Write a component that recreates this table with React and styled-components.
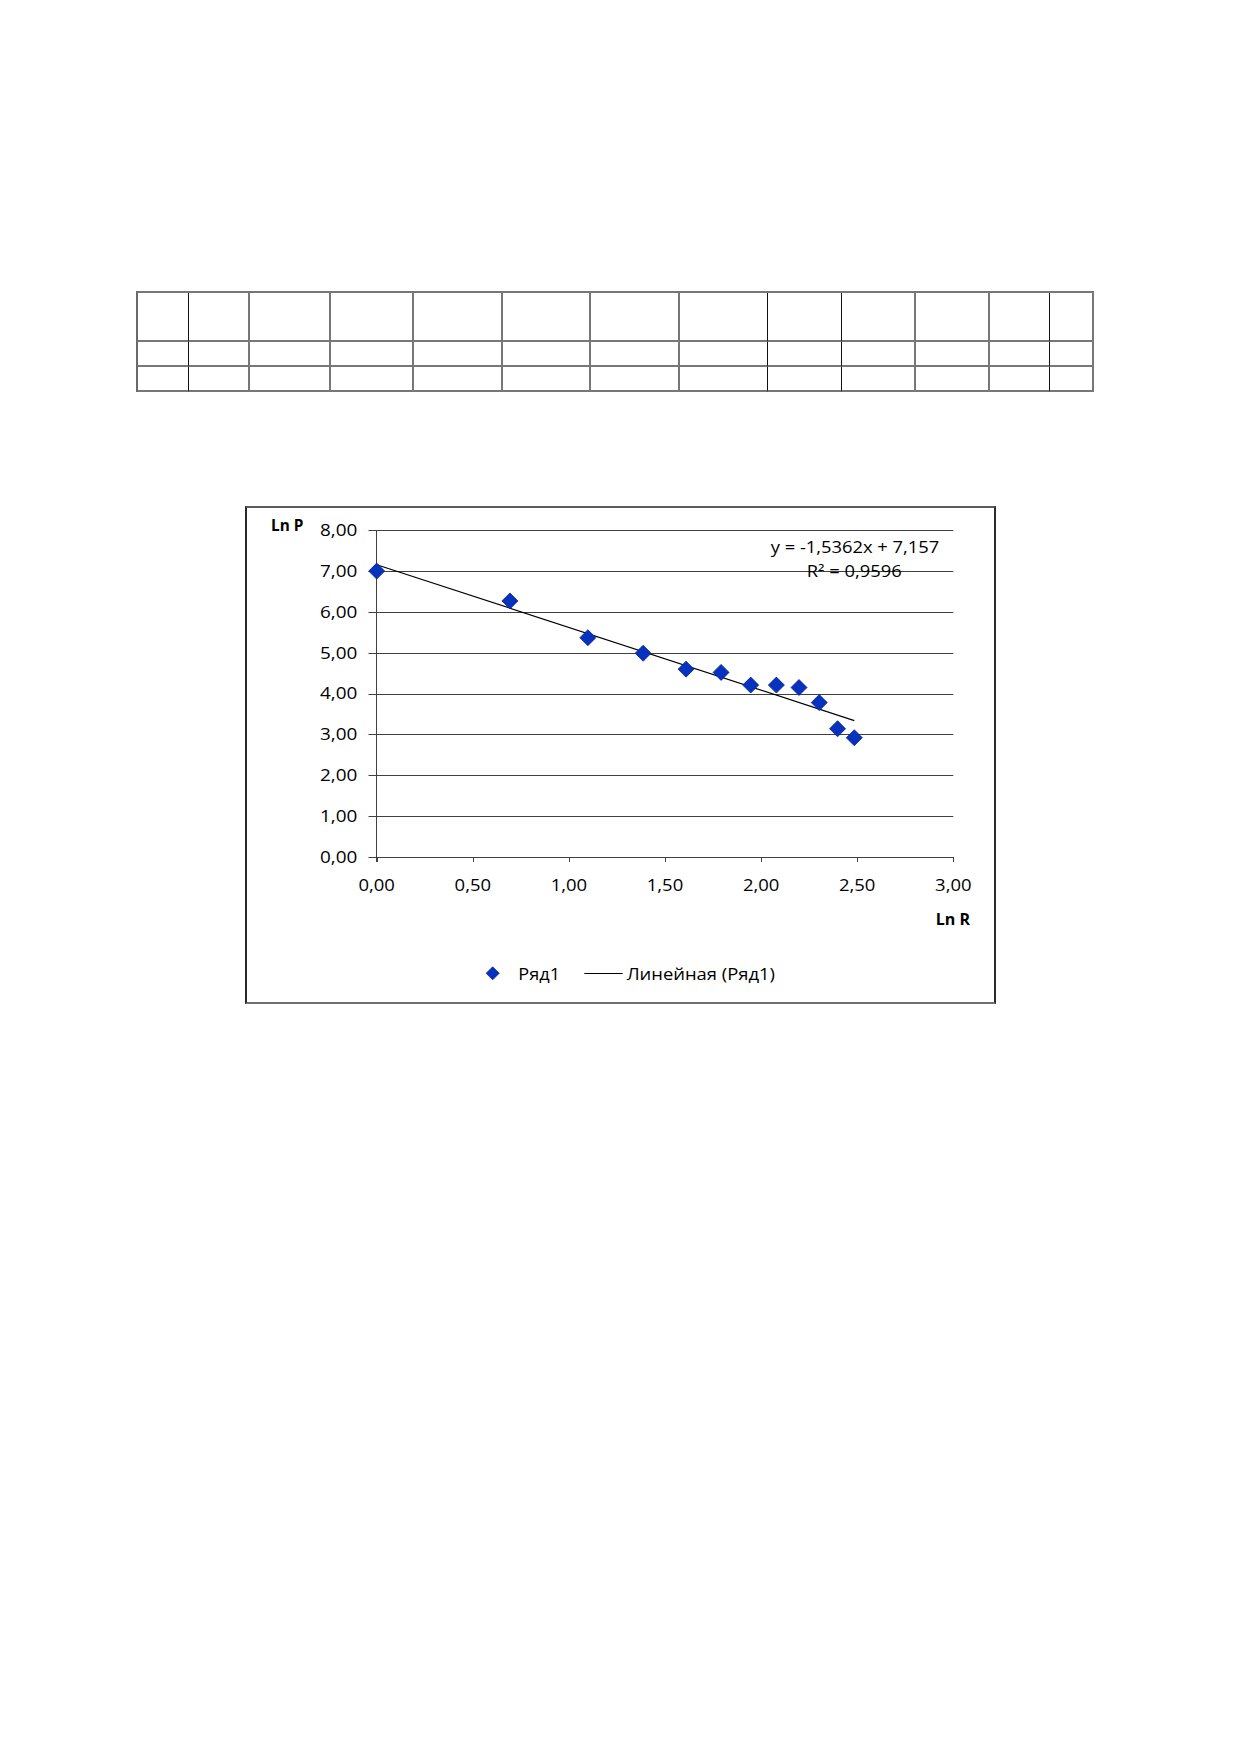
import React from 'react';
import styled, { createGlobalStyle } from 'styled-components';

const GlobalStyle = createGlobalStyle`
  html, body {
    margin: 0;
    padding: 0;
    background: #fff;
  }
  body {
    font-family: "Open Sans", "Liberation Sans", sans-serif;
  }
`;

// column widths of the empty table (px), taken from the scan
const COLS = [51, 61, 81, 83, 89, 88, 89, 88, 74, 74, 74, 60, 44];
const DARK_COLS = [0, 7, 8, 11];
const ROWS = [49, 25, 25];

// chart geometry in page coordinates
const X0 = 376.7;
const XS = 192.2;
const Y0 = 857;
const YS = 40.84;
const px = (v) => X0 + v * XS;
const py = (v) => Y0 - v * YS;

const SERIES = [7.0, 6.27, 5.37, 4.99, 4.6, 4.52, 4.21, 4.21, 4.15, 3.78, 3.14, 2.92].map((y, i) => ({
  x: Math.log(i + 1),
  y,
}));

const Page = styled.div`
  width: 1239px;
  min-height: 1752px;
  box-sizing: border-box;
  padding-top: 291px;
  background: #fff;
`;

const DataGrid = styled.div`
  display: grid;
  grid-template-columns: ${COLS.map((w) => `${w}px`).join(' ')};
  grid-template-rows: ${ROWS.map((h) => `${h}px`).join(' ')};
  width: max-content;
  margin-left: 136px;
  border-top: 2px solid #777;
  border-left: 2px solid #6a6a6a;
`;

const Cell = styled.div`
  box-sizing: border-box;
  border-bottom: 2px solid #777;
  border-right: ${(p) => (p.$dark ? '1px solid #111' : '2px solid #777')};
`;

const ChartFrame = styled.div`
  box-sizing: border-box;
  width: 751px;
  height: 498px;
  margin: 114px 0 0 245px;
  border-style: solid;
  border-width: 2px;
  border-color: #5c5c5c #2b2b2b #707070 #2b2b2b;
  background: #fff;
`;

const ChartSvg = styled.svg`
  display: block;
`;

const Label = styled.text`
  font-family: "Open Sans", "Liberation Sans", sans-serif;
  font-size: ${(p) => p.$size || 16}px;
  font-weight: ${(p) => (p.$bold ? 700 : 400)};
  fill: #000;
`;

const fmt = (v) => v.toFixed(2).replace('.', ',');

function Marker({ x, y, h = 8 }) {
  return (
    <path
      d={`M${x} ${y - h} L${x + h} ${y} L${x} ${y + h} L${x - h} ${y} Z`}
      fill="#0632bd"
      stroke="#08229a"
      strokeWidth="0.8"
    />
  );
}

function Chart() {
  const yTicks = [0, 1, 2, 3, 4, 5, 6, 7, 8];
  const xTicks = [0, 0.5, 1, 1.5, 2, 2.5, 3];
  const xEnd = Math.log(12);

  return (
    <ChartFrame>
      <ChartSvg width="747" height="494" viewBox="247 508 747 494">
        {yTicks.map((t) => (
          <line
            key={`g${t}`}
            x1={368.5}
            x2={px(3)}
            y1={Math.round(py(t)) + 0.5}
            y2={Math.round(py(t)) + 0.5}
            stroke="#404040"
            strokeWidth="1"
          />
        ))}
        <line x1={376.5} x2={376.5} y1={530} y2={862} stroke="#404040" strokeWidth="1" />
        {xTicks.map((t) => (
          <line
            key={`t${t}`}
            x1={Math.round(px(t)) + 0.5}
            x2={Math.round(px(t)) + 0.5}
            y1={857}
            y2={862}
            stroke="#404040"
            strokeWidth="1"
          />
        ))}

        {yTicks.map((t) => (
          <Label key={`yl${t}`} x={357.3} y={py(t) + 5.8} textAnchor="end" textLength="37.3" lengthAdjust="spacingAndGlyphs">
            {fmt(t)}
          </Label>
        ))}
        {xTicks.map((t) => (
          <Label key={`xl${t}`} x={px(t) - 18.2} y={890.8} textLength="36.4" lengthAdjust="spacingAndGlyphs">
            {fmt(t)}
          </Label>
        ))}

        <Label $bold $size={16} x={271} y={531} textLength="32.3" lengthAdjust="spacingAndGlyphs">Ln P</Label>
        <Label $bold $size={16} x={935.7} y={925} textLength="34.3" lengthAdjust="spacingAndGlyphs">Ln R</Label>

        <line
          x1={px(0)}
          y1={py(7.157)}
          x2={px(xEnd)}
          y2={py(7.157 - 1.5362 * xEnd)}
          stroke="#000"
          strokeWidth="1.2"
        />
        {SERIES.map((p, i) => (
          <Marker key={i} x={px(p.x)} y={py(p.y)} />
        ))}

        <Label $size={15.5} x={770.7} y={552.5} textLength="168.6" lengthAdjust="spacingAndGlyphs">
          y = -1,5362x + 7,157
        </Label>
        <Label $size={15.5} x={806.7} y={577} textLength="95" lengthAdjust="spacingAndGlyphs">
          R² = 0,9596
        </Label>

        <Marker x={492.7} y={973.3} h={6.5} />
        <Label $size={16.5} x={518.3} y={980.2} textLength="41.7" lengthAdjust="spacingAndGlyphs">Ряд1</Label>
        <line x1={584.3} x2={622.7} y1={973.5} y2={973.5} stroke="#000" strokeWidth="1" />
        <Label $size={16.5} x={626.7} y={980.2} textLength="148.3" lengthAdjust="spacingAndGlyphs">
          Линейная (Ряд1)
        </Label>
      </ChartSvg>
    </ChartFrame>
  );
}

export default function App() {
  return (
    <Page>
      <GlobalStyle />
      <DataGrid>
        {ROWS.map((_, r) =>
          COLS.map((_, c) => <Cell key={`${r}-${c}`} $dark={DARK_COLS.includes(c)} />)
        )}
      </DataGrid>
      <Chart />
    </Page>
  );
}
